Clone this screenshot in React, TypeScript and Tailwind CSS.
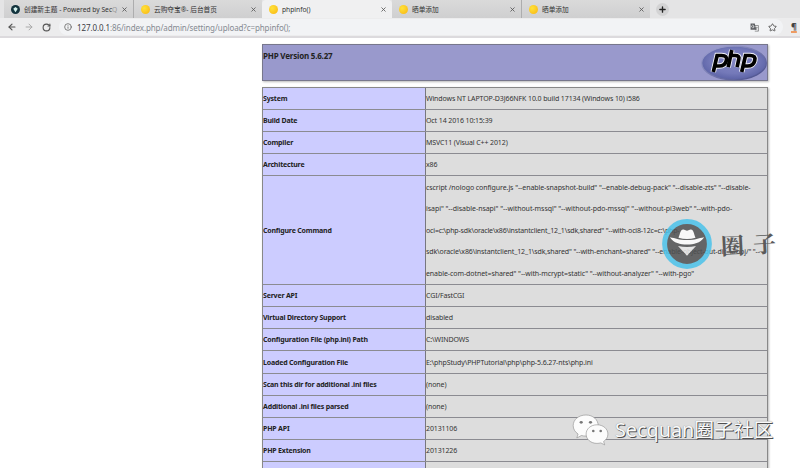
import { ArrowLeft, ArrowRight, Info, Plus, RotateCw, Star, X } from 'lucide-react';

const LATIN = "font-['Noto_Sans','Noto_Sans_CJK_SC',sans-serif]";

type Line = { text: string; tracking: string };
type Row = { label: string; value: Line[]; height: string };

const plain = (text: string): Line[] => [{ text, tracking: 'tracking-[-0.11px]' }];

const rows: Row[] = [
  { label: 'System', value: plain('Windows NT LAPTOP-D3J66NFK 10.0 build 17134 (Windows 10) i586'), height: 'h-[22px]' },
  { label: 'Build Date', value: plain('Oct 14 2016 10:15:39'), height: 'h-[22px]' },
  { label: 'Compiler', value: plain('MSVC11 (Visual C++ 2012)'), height: 'h-[22px]' },
  { label: 'Architecture', value: plain('x86'), height: 'h-[22px]' },
  {
    label: 'Configure Command',
    value: [
      { text: 'cscript /nologo configure.js "--enable-snapshot-build" "--enable-debug-pack" "--disable-zts" "--disable-', tracking: 'tracking-[-0.075px]' },
      { text: 'isapi" "--disable-nsapi" "--without-mssql" "--without-pdo-mssql" "--without-pi3web" "--with-pdo-', tracking: 'tracking-[-0.045px]' },
      { text: 'oci=c:\\php-sdk\\oracle\\x86\\instantclient_12_1\\sdk,shared" "--with-oci8-12c=c:\\php-', tracking: 'tracking-[-0.17px]' },
      { text: 'sdk\\oracle\\x86\\instantclient_12_1\\sdk,shared" "--with-enchant=shared" "--enable-object-out-dir=../obj/" "--', tracking: 'tracking-[-0.12px]' },
      { text: 'enable-com-dotnet=shared" "--with-mcrypt=static" "--without-analyzer" "--with-pgo"', tracking: 'tracking-[-0.075px]' },
    ],
    height: 'h-[109px]',
  },
  { label: 'Server API', value: plain('CGI/FastCGI'), height: 'h-[22px]' },
  { label: 'Virtual Directory Support', value: plain('disabled'), height: 'h-[22px]' },
  { label: 'Configuration File (php.ini) Path', value: plain('C:\\WINDOWS'), height: 'h-[22px]' },
  { label: 'Loaded Configuration File', value: plain('E:\\phpStudy\\PHPTutorial\\php\\php-5.6.27-nts\\php.ini'), height: 'h-[23px]' },
  { label: 'Scan this dir for additional .ini files', value: plain('(none)'), height: 'h-[22px]' },
  { label: 'Additional .ini files parsed', value: plain('(none)'), height: 'h-[22px]' },
  { label: 'PHP API', value: plain('20131106'), height: 'h-[22px]' },
  { label: 'PHP Extension', value: plain('20131226'), height: 'h-[22px]' },
  { label: '', value: [], height: 'h-[22px]' },
];

function SunIcon() {
  return <span className="h-[9px] w-[9px] shrink-0 rounded-full bg-[radial-gradient(circle_at_35%_35%,#ffe23a,#f9b410)]" />;
}

function Tab({ title, width, active = false, first = false, divider = false }: { title: string; width: string; active?: boolean; first?: boolean; divider?: boolean }) {
  return (
    <div
      className={`flex h-[18px] shrink-0 items-center pr-[5px] pl-[7px] ${width} ${
        active ? 'rounded-t-[4px] bg-[#f0f0f1]' : 'bg-linear-to-b from-[#dadada] to-[#cfcfd0]'
      } ${divider ? 'border-r border-[#adadae]' : ''}`}
    >
      {first ? (
        <svg viewBox="0 0 10 10" className="h-[9px] w-[9px] shrink-0">
          <circle cx="5" cy="5" r="5" fill="#12333d" />
          <path d="M5 2.3 7.5 4.2 5 8 2.5 4.2Z" fill="#d4f2ee" />
        </svg>
      ) : (
        <SunIcon />
      )}
      <span className="ml-[4px] min-w-0 flex-1 pt-px text-[6.7px] leading-[12px] whitespace-nowrap text-[#333]">
        {first ? (
          <>
            创建新主题 - Powered by Sec<span className="text-[#999]">Q</span>
          </>
        ) : (
          title
        )}
      </span>
      <X className="h-[7px] w-[7px] shrink-0 text-[#555]" strokeWidth={2.8} />
    </div>
  );
}

function TranslateIcon() {
  return (
    <svg viewBox="0 0 16 16" className="h-[9px] w-[9px] shrink-0">
      <path d="M6 4.5h9v10H8.5" fill="none" stroke="#777" strokeWidth="1.3" />
      <path d="M8.5 8h5M11 6.8V8M12.7 8c-.5 2-2 3.5-3.8 4.3M9.5 9.5l3.5 3" fill="none" stroke="#777" strokeWidth="1" />
      <path d="M1 1h7.5l2.5 11H1Z" fill="#5c5e62" />
      <path d="M7.4 6.4H5.2M7.4 6.4A2.3 2.3 0 1 1 6.8 4.6" fill="none" stroke="#f2f3f5" strokeWidth="1.2" />
    </svg>
  );
}

function Browser() {
  return (
    <header>
      <div className="flex h-[18px] bg-[#e4e4e5] pl-[4px]">
        <Tab title="" width="w-[130px]" first divider />
        <Tab title="云购夺宝®- 后台首页" width="w-[128px]" />
        <Tab title="phpinfo()" width="w-[130px]" active />
        <Tab title="晒单添加" width="w-[130px]" divider />
        <Tab title="晒单添加" width="w-[128px]" />
        <span className="mt-[3px] ml-[6px] flex h-[13px] w-[13px] items-center justify-center rounded-full bg-[#d3d3d4]">
          <Plus className="h-[9px] w-[9px] text-[#222]" strokeWidth={3.6} />
        </span>
      </div>
      <div className="flex h-[20px] items-center border-b-2 border-[#dcdadd] bg-[#ececed] pl-[7px]">
        <ArrowLeft className="h-[10px] w-[10px] text-[#555]" strokeWidth={2.8} />
        <ArrowRight className="ml-[7px] h-[10px] w-[10px] text-[#aaa]" strokeWidth={2.4} />
        <RotateCw className="ml-[8px] h-[9px] w-[9px] text-[#555]" strokeWidth={3} />
        <div className="ml-[8px] flex h-[16px] w-[724px] items-center rounded-full bg-[#f2f3f5] pr-[6px] pl-[5px]">
          <Info className="h-[8px] w-[8px] text-[#666]" strokeWidth={2.4} />
          <span className="ml-[5px] flex-1 pt-px text-[8px] leading-[14px] tracking-[-0.1px] whitespace-nowrap text-[#858a91]">
            <span className="text-[#3c4046]">127.0.0.1</span>:86/index.php/admin/setting/upload?c=phpinfo();
          </span>
          <TranslateIcon />
          <Star className="ml-[9px] h-[9px] w-[9px] text-[#555]" strokeWidth={2.4} />
        </div>
        <span className="ml-[8px] text-[9px] leading-[10px] font-bold text-[#444] underline decoration-[#ee9b62] decoration-2">¶</span>
      </div>
    </header>
  );
}

function PhpLogo() {
  return (
    <svg viewBox="0 0 66 36" className="h-[36px] w-[66px]">
      <defs>
        <radialGradient id="disc" cx="50%" cy="45%" r="60%">
          <stop offset="0" stopColor="#8286c4" />
          <stop offset="0.6" stopColor="#7479b9" />
          <stop offset="1" stopColor="#555ca0" />
        </radialGradient>
        <linearGradient id="rim" x1="0" y1="0" x2="1" y2="1">
          <stop offset="0" stopColor="#a4a6d4" />
          <stop offset="1" stopColor="#454b88" />
        </linearGradient>
      </defs>
      <ellipse cx="33" cy="18" rx="32.3" ry="16.8" fill="url(#disc)" stroke="url(#rim)" strokeWidth="1.2" />
      <g fill="none" strokeLinejoin="miter">
        {['#f3f3fa', '#000'].map((color, i) => (
          <g key={color} stroke={color} strokeWidth={i ? 3.7 : 5.5}>
            <path d="M12.3 27 16.1 10.5H20.6Q26.8 10.5 25.3 15.7Q24 21 18.2 21H14.3" />
            <path d="M30.8 5 27.2 22.2M29.7 10.5H34.2Q38.8 10.5 37.8 14.2L36.1 22.2" />
            <path d="M40.7 27 44.5 10.5H49Q55.2 10.5 53.7 15.7Q52.4 21 46.6 21H42.7" />
          </g>
        ))}
      </g>
    </svg>
  );
}

function CircleMark() {
  return (
    <div className="absolute top-[219px] left-[662px] flex items-center">
      <svg viewBox="0 0 50 50" className="h-[50px] w-[50px] opacity-85">
        <circle cx="25" cy="25" r="22.4" fill="#505152" stroke="#4bc3ea" strokeWidth="5" />
        <path d="M16.5 18.7C18.2 15 18.3 10 21.5 10.5L25 11.7 28.5 10.5C31.7 10 31.8 15 33.5 18.7Q25 21.3 16.5 18.7Z" fill="#fdfdfd" />
        <path d="M7.8 18.2C14 19.1 16 21 25 21S36 19.1 42.2 18.2C38 24.1 32 25.5 25 25.5S12 24.1 7.8 18.2Z" fill="#fff" />
        <path d="M16 27Q25 29.2 34 27L25 36.8Z" fill="#e8e8e8" />
      </svg>
      <span className="ml-[9px] -rotate-3 font-['Noto_Serif_CJK_SC','Noto_Sans_CJK_SC',serif] text-[23px] leading-[30px] font-bold tracking-[9px] text-[#5a5a5a]">圈子</span>
    </div>
  );
}

function WeChatMark() {
  return (
    <div className="absolute top-[413px] left-[572px] flex h-[34px] items-center">
      <svg viewBox="0 0 38 34" className="h-[34px] w-[38px]" fill="#fcfcfc" stroke="#8c8c8c" strokeWidth="0.6">
        <path d="M14 2C6.7 2 1.2 6.6 1.2 12.6c0 3.5 1.9 6.5 4.9 8.4L4.8 25l4.6-2.5c1.5.4 3 .6 4.6.6 7 0 12.2-4.6 12.2-10.5S21 2 14 2Z" />
        <path d="M25 11.8c-6.1 0-10.9 4-10.9 9.3s4.8 9.3 10.9 9.3c1.4 0 2.6-.2 3.8-.5l3.9 2-1.1-3.4c2.7-1.7 4.3-4.3 4.3-7.4 0-5.3-4.8-9.3-10.9-9.3Z" />
        <g fill="#777" stroke="none">
          <ellipse cx="9.2" cy="9.3" rx="1.6" ry="1.4" />
          <ellipse cx="18.5" cy="9.3" rx="1.6" ry="1.4" />
          <circle cx="21.3" cy="18" r="1.3" />
          <circle cx="28.7" cy="18" r="1.3" />
        </g>
      </svg>
      <span className="ml-[5px] text-[19.8px] leading-[28px] whitespace-nowrap text-[#fafafa] [text-shadow:1px_1px_0.5px_#505050,0_0_1px_#777]">Secquan圈子社区</span>
    </div>
  );
}

export default function App() {
  return (
    <div className={`relative h-[468px] w-[800px] overflow-hidden bg-white ${LATIN}`}>
      <Browser />
      <main className="mt-[6px] ml-[262px] w-[506px]">
        <section className="flex h-[37px] items-start justify-between border border-[#77778c] bg-[#9999cc] shadow-[1px_1px_2px_#bbb]">
          <h1 className="mt-[5px] text-[8px] leading-[12px] font-bold tracking-[-0.2px] text-[#222]">PHP Version 5.6.27</h1>
          <PhpLogo />
        </section>
        <section className="mt-[6px] border-x border-t border-[#888] text-[7px] text-[#333] shadow-[1px_1px_2px_#bbb]">
          {rows.map((row, i) => (
            <div key={i} className={`flex border-b border-[#8b8b91] ${row.height}`}>
              <div className="flex w-[163px] shrink-0 items-center border-r border-[#77777f] bg-[#ccccff] pt-[2px] font-bold tracking-[-0.19px] whitespace-nowrap text-[#222]">{row.label}</div>
              <div className="flex min-w-0 flex-1 flex-col justify-center bg-[#dddddd] pt-px">
                {row.value.map((line) => (
                  <p key={line.text} className={`leading-[21.6px] whitespace-nowrap ${line.tracking}`}>{line.text}</p>
                ))}
              </div>
            </div>
          ))}
        </section>
      </main>
      <CircleMark />
      <WeChatMark />
    </div>
  );
}
